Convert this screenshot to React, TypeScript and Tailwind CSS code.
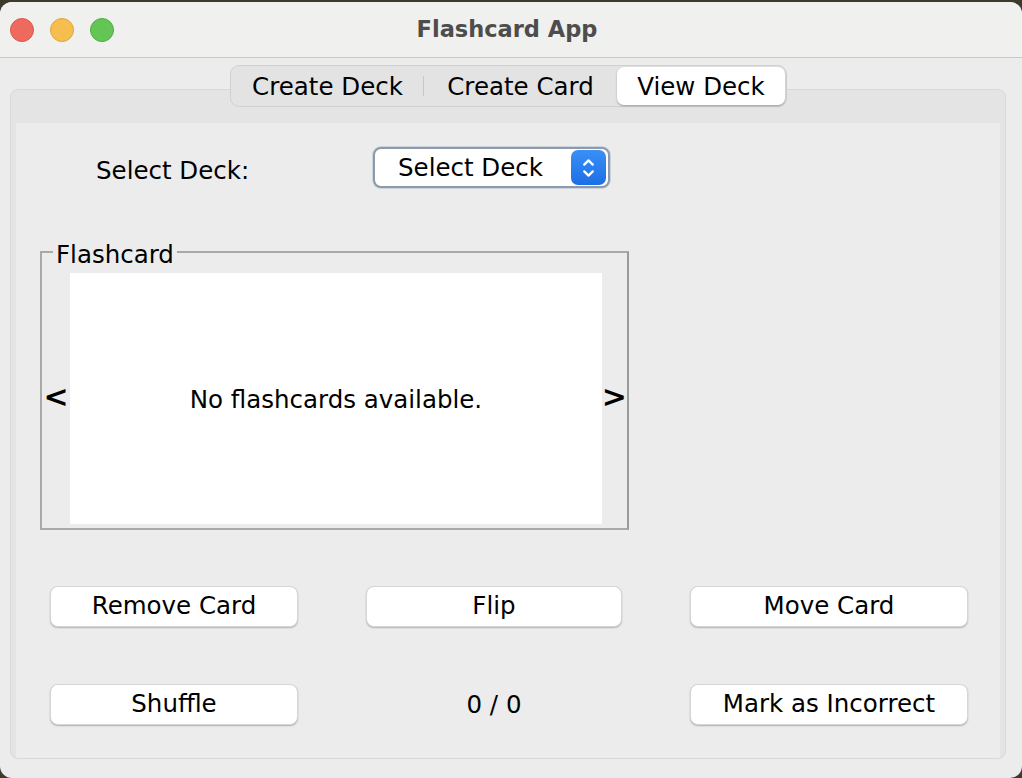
import { ChevronUp, ChevronDown } from 'lucide-react'

const font = { fontFamily: '"DejaVu Sans", "Open Sans", sans-serif' }

function MacButton({ label, className }: { label: string; className: string }) {
  return (
    <button
      className={`h-[41px] rounded-[8px] bg-white text-[24.5px] leading-none text-black border border-[#d6d6d6] shadow-[0_1px_1.5px_rgba(0,0,0,0.25)] flex items-center justify-center pb-[1px] ${className}`}
    >
      {label}
    </button>
  )
}

export default function App() {
  return (
    <div className="w-[1022px] h-[778px] bg-[#3d3a2c] overflow-hidden" style={font}>
      <div className="mt-[2px] h-[776px] rounded-t-[12px] rounded-b-[12px] bg-[#ececec] flex flex-col overflow-hidden">
        {/* title bar */}
        <div className="h-[56px] bg-[#f0f0ee] border-b border-[#c9c9c9] flex items-center relative shrink-0">
          <div className="flex gap-[16px] pl-[10px]">
            <span className="w-[24px] h-[24px] rounded-full bg-[#ee6a5f] border border-[#d9574c]" />
            <span className="w-[24px] h-[24px] rounded-full bg-[#f5be4f] border border-[#dea73c]" />
            <span className="w-[24px] h-[24px] rounded-full bg-[#62c554] border border-[#51ad44]" />
          </div>
          <div className="absolute inset-0 flex items-center justify-center text-[22.5px] font-bold text-[#4d4d4d] pr-[8px]">
            Flashcard App
          </div>
        </div>

        {/* tabbed pane */}
        <div className="flex-1 px-[10px] pt-[7px] pb-[19px] flex flex-col">
          <div className="flex relative z-10 pl-[220px]">
            <div className="flex h-[42px] rounded-[9px] bg-[#e3e3e3] border border-[#d0d0d0] p-[1px] items-stretch text-[24.5px] leading-none text-black">
              <div className="w-[191px] flex items-center justify-center pt-[3px]">Create Deck</div>
              <div className="w-px bg-[#c8c8c8] my-[9px]" />
              <div className="w-[193px] flex items-center justify-center pt-[3px]">Create Card</div>
              <div className="w-[168px] flex items-center justify-center bg-white rounded-[7px] shadow-[0_1px_2px_rgba(0,0,0,0.3)] pt-[3px]">
                View Deck
              </div>
            </div>
          </div>
          <div className="-mt-[18px] flex-1 rounded-[8px] border border-[#d8d8d8] bg-[#e4e4e4] pt-[33px] px-[5px] mr-[6px] flex flex-col overflow-hidden">
            <div className="flex-1 bg-[#ececec] flex flex-col text-black">
              {/* select deck row */}
              <div className="flex items-center mt-[24px] h-[41px]">
                <div className="ml-[80px] w-[277px] text-[24.5px] leading-none pt-[8px]">Select Deck:</div>
                <div className="w-[237px] h-[41px] rounded-[8px] border-[2px] border-[#8e9aab] bg-white flex items-center justify-between pl-[23px] pr-[2px] shadow-[0_0_0_1px_rgba(160,175,200,0.4)]">
                  <span className="text-[24.5px] leading-none pt-[2px]">Select Deck</span>
                  <span className="w-[35px] h-[35px] rounded-[7px] bg-gradient-to-b from-[#3a8ff7] to-[#1b6fe6] flex flex-col items-center justify-center">
                    <ChevronUp size={17} strokeWidth={3.2} className="text-white -mb-[3px]" />
                    <ChevronDown size={17} strokeWidth={3.2} className="text-white -mt-[3px]" />
                  </span>
                </div>
              </div>

              {/* flashcard group */}
              <div className="ml-[24px] mt-[63px] w-[589px] h-[279px] relative border-[2px] border-[#a9a9a9] border-r-[#9a9a9a] flex items-stretch">
                <div className="absolute -top-[11px] left-[11px] bg-[#ececec] px-[3px] text-[24.5px] leading-none h-[26px] flex items-center">
                  Flashcard
                </div>
                <div className="w-[28px] flex items-center justify-center text-[30px] font-bold pt-[12px]">&lt;</div>
                <div className="mt-[20px] mb-[4px] w-[532px] bg-white flex items-center justify-center text-[24.5px] pt-[4px]">
                  No flashcards available.
                </div>
                <div className="flex-1 flex items-center justify-center text-[30px] font-bold pt-[12px]">&gt;</div>
              </div>

              {/* button rows */}
              <div className="flex items-center mt-[56px]">
                <MacButton label="Remove Card" className="ml-[34px] w-[248px]" />
                <MacButton label="Flip" className="ml-[68px] w-[256px]" />
                <MacButton label="Move Card" className="ml-[68px] w-[278px]" />
              </div>
              <div className="flex items-center mt-[57px]">
                <MacButton label="Shuffle" className="ml-[34px] w-[248px]" />
                <div className="ml-[68px] w-[256px] text-center text-[24.5px] pt-[2px]">0 / 0</div>
                <MacButton label="Mark as Incorrect" className="ml-[68px] w-[278px]" />
              </div>
            </div>
          </div>
        </div>
      </div>
    </div>
  )
}
